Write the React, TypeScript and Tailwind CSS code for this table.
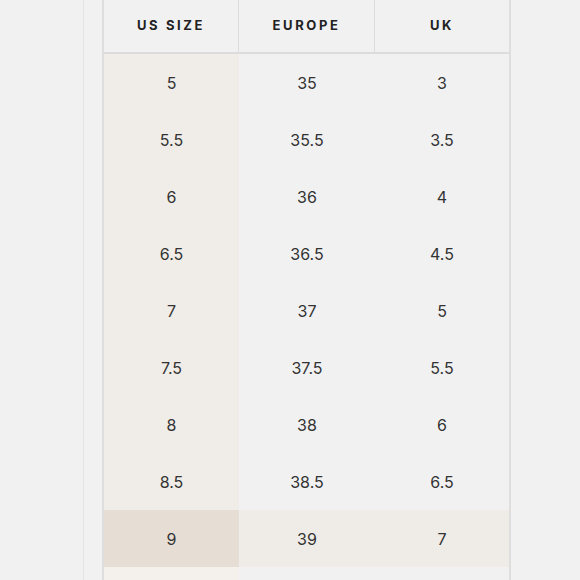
const rows: [string, string, string][] = [
  ["5", "35", "3"],
  ["5.5", "35.5", "3.5"],
  ["6", "36", "4"],
  ["6.5", "36.5", "4.5"],
  ["7", "37", "5"],
  ["7.5", "37.5", "5.5"],
  ["8", "38", "6"],
  ["8.5", "38.5", "6.5"],
  ["9", "39", "7"],
];

const font = { fontFamily: "Inter, 'DejaVu Sans', sans-serif" };

export default function App() {
  return (
    <div className="w-[580px] h-[580px] overflow-hidden bg-[#f1f1f1] flex" style={font}>
      <div className="w-[84px] h-full border-r border-[#e3e3e3]" />
      <div className="w-[18px] h-full" />
      <div className="w-[409px] border-l-2 border-r-2 border-[#dedede] flex flex-col">
        <div className="flex shrink-0 h-[54px] border-b-2 border-[#dcdcdc] text-[13px] font-bold tracking-[0.2em] text-[#222]">
          <div className="w-[135px] flex items-center justify-center border-r border-[#dcdcdc]">US SIZE</div>
          <div className="w-[136px] flex items-center justify-center border-r border-[#dcdcdc]">EUROPE</div>
          <div className="flex-1 flex items-center justify-center">UK</div>
        </div>
        {rows.map((r, i) => {
          const hi = r[0] === "9";
          return (
            <div key={i} className={`flex h-[57px] shrink-0 text-[16px] text-[#333] ${hi ? "bg-[#efebe6]" : ""}`}>
              <div className={`w-[135px] flex items-center justify-center ${hi ? "bg-[#e6ded5]" : "bg-[#f0ece7]"}`}>
                {r[0]}
              </div>
              <div className="w-[136px] flex items-center justify-center">{r[1]}</div>
              <div className="flex-1 flex items-center justify-center">{r[2]}</div>
            </div>
          );
        })}
        {/* next row, mostly below the fold */}
        <div className="flex flex-1">
          <div className="w-[135px] bg-[#f4f1ed]" />
        </div>
      </div>
    </div>
  );
}
